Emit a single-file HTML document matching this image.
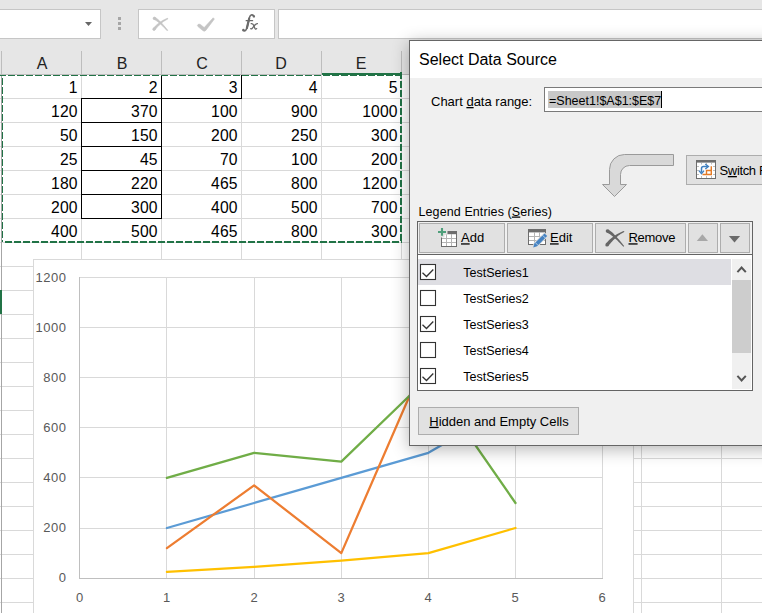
<!DOCTYPE html>
<html><head><meta charset="utf-8">
<style>
html,body{margin:0;padding:0;}
body{width:762px;height:613px;overflow:hidden;position:relative;background:#fff;font-family:"Liberation Sans",sans-serif;}
.abs{position:absolute;}
svg{position:absolute;left:0;top:0;}
#dlg{position:absolute;left:409px;top:40px;width:400px;height:404px;border:1px solid #666;background:#f0f0f0;box-shadow:0 3px 16px rgba(0,0,0,0.3);overflow:hidden;}
#dlg svg{left:-410px;top:-41px;}
</style></head><body>

<!-- Sheet + chart -->
<svg width="762" height="613" font-family="Liberation Sans, sans-serif">
  <!-- top bar -->
  <rect x="0" y="0" width="762" height="74" fill="#e6e6e6"/>
  <rect x="-1" y="9.5" width="101.5" height="29" fill="#fff" stroke="#c6c6c6"/>
  <path d="M85,22 L92,22 L88.5,26 Z" fill="#666"/>
  <rect x="118" y="17" width="3" height="3" fill="#a6a6a6"/>
  <rect x="118" y="22" width="3" height="3" fill="#a6a6a6"/>
  <rect x="118" y="27" width="3" height="3" fill="#a6a6a6"/>
  <rect x="138.5" y="9.5" width="136" height="29" fill="#fff" stroke="#c6c6c6"/>
  <g fill="#c4c4c4" stroke="#c4c4c4" stroke-width="0.9" stroke-linejoin="round" transform="translate(152.8,17.2) scale(0.79) translate(-605.3,-229.6)">
    <path d="M606.58,232.36 L607.13,232.56 L607.70,232.79 L608.31,233.10 L608.97,233.47 L609.68,233.90 L610.42,234.40 L611.21,234.97 L612.03,235.60 L612.89,236.29 L613.79,237.05 L614.72,237.87 L615.69,238.76 L616.70,239.70 L617.74,240.71 L618.81,241.78 L619.92,242.92 L621.07,244.11 L622.25,245.37 L623.46,246.69 L624.14,246.11 L623.01,244.71 L621.91,243.37 L620.84,242.09 L619.80,240.87 L618.80,239.72 L617.82,238.62 L616.88,237.58 L615.97,236.60 L615.09,235.67 L614.24,234.81 L613.42,234.01 L612.63,233.26 L611.87,232.57 L611.13,231.94 L610.42,231.36 L609.73,230.84 L609.07,230.38 L608.42,229.97 L607.82,229.64 Z"/>
    <path d="M607.95,245.86 L608.71,244.86 L609.48,243.91 L610.26,242.98 L611.04,242.07 L611.84,241.20 L612.66,240.35 L613.48,239.53 L614.32,238.73 L615.17,237.97 L616.03,237.23 L616.90,236.52 L617.79,235.83 L618.69,235.18 L619.61,234.55 L620.53,233.95 L621.47,233.37 L622.43,232.83 L623.39,232.31 L624.38,231.81 L624.02,230.99 L622.97,231.39 L621.93,231.82 L620.90,232.28 L619.88,232.78 L618.86,233.30 L617.85,233.86 L616.86,234.45 L615.87,235.07 L614.89,235.72 L613.92,236.40 L612.96,237.11 L612.01,237.86 L611.07,238.63 L610.14,239.44 L609.22,240.28 L608.31,241.15 L607.41,242.05 L606.52,242.99 L605.65,243.94 Z"/>
    <circle cx="607.2" cy="231" r="1.5"/>
    <circle cx="606.8" cy="244.9" r="1.5"/>
  </g>
  <path d="M197.4,25.4 Q198.4,23.2 200.4,24.4 L204.2,27.6 L213.2,17.8 L214.4,19.0 L205.8,30.4 Q204.4,31.9 202.8,30.6 L198.0,26.6 Z" fill="#c4c4c4" stroke="#c4c4c4" stroke-width="0.6" stroke-linejoin="round"/>
  <g stroke="#6b6b6b" fill="none" stroke-linecap="round">
    <path d="M243.2,30.6 C245.2,31.6 246.6,30.2 247.4,26.2 L249.4,17.6 C250.1,14.8 252,14.2 253.6,15.6" stroke-width="1.6"/>
    <path d="M246.9,28 L247.5,25.6 L249.2,18.6" stroke-width="2.2"/>
    <circle cx="243.4" cy="30" r="1.3" fill="#6b6b6b" stroke="none"/>
    <circle cx="253.9" cy="16.4" r="1.2" fill="#6b6b6b" stroke="none"/>
    <path d="M246.2,20.7 H252.6" stroke-width="1.3"/>
    <path d="M251.2,23.6 C252.8,23.2 253.4,24.2 254,26 L254.6,27.8 C255.1,29.2 255.9,29.4 256.6,28.6" stroke-width="1.3"/>
    <path d="M257.4,23.6 C256.4,23.4 255.4,24.2 253.6,26.6 L252.4,28.2 C251.8,29 251.2,29.2 250.8,28.6" stroke-width="1.3"/>
  </g>
  <rect x="278.5" y="9.5" width="500" height="29" fill="#fff" stroke="#c6c6c6"/>

  <!-- column headers -->
  <g stroke="#bdbdbd" stroke-width="1">
    <line x1="1.5" y1="51" x2="1.5" y2="613"/>
    <line x1="81.5" y1="51" x2="81.5" y2="74"/>
    <line x1="161.5" y1="51" x2="161.5" y2="74"/>
    <line x1="241.5" y1="51" x2="241.5" y2="74"/>
    <line x1="321.5" y1="51" x2="321.5" y2="74"/>
    <line x1="401.5" y1="51" x2="401.5" y2="74"/>
    <line x1="0" y1="74.5" x2="762" y2="74.5"/>
  </g>
  <g font-size="16" fill="#222" text-anchor="middle">
    <text x="42" y="69">A</text>
    <text x="122" y="69">B</text>
    <text x="202" y="69">C</text>
    <text x="281" y="69">D</text>
    <text x="361" y="69">E</text>
  </g>

  <!-- grid -->
  <g stroke="#d9d9d9" stroke-width="1">
    <line x1="81.5" y1="75" x2="81.5" y2="613"/>
    <line x1="161.5" y1="75" x2="161.5" y2="613"/>
    <line x1="241.5" y1="75" x2="241.5" y2="613"/>
    <line x1="321.5" y1="75" x2="321.5" y2="613"/>
    <line x1="401.5" y1="75" x2="401.5" y2="613"/>
    <line x1="481.5" y1="75" x2="481.5" y2="613"/>
    <line x1="561.5" y1="75" x2="561.5" y2="613"/>
    <line x1="641.5" y1="75" x2="641.5" y2="613"/>
    <line x1="721.5" y1="75" x2="721.5" y2="613"/>
    <line x1="0" y1="98.5" x2="762" y2="98.5"/>
    <line x1="0" y1="122.5" x2="762" y2="122.5"/>
    <line x1="0" y1="146.5" x2="762" y2="146.5"/>
    <line x1="0" y1="170.5" x2="762" y2="170.5"/>
    <line x1="0" y1="194.5" x2="762" y2="194.5"/>
    <line x1="0" y1="218.5" x2="762" y2="218.5"/>
    <line x1="0" y1="242.5" x2="762" y2="242.5"/>
    <line x1="0" y1="266.5" x2="762" y2="266.5"/>
    <line x1="0" y1="290.5" x2="762" y2="290.5"/>
    <line x1="0" y1="314.5" x2="762" y2="314.5"/>
    <line x1="0" y1="338.5" x2="762" y2="338.5"/>
    <line x1="0" y1="362.5" x2="762" y2="362.5"/>
    <line x1="0" y1="386.5" x2="762" y2="386.5"/>
    <line x1="0" y1="410.5" x2="762" y2="410.5"/>
    <line x1="0" y1="434.5" x2="762" y2="434.5"/>
    <line x1="0" y1="458.5" x2="762" y2="458.5"/>
    <line x1="0" y1="482.5" x2="762" y2="482.5"/>
    <line x1="0" y1="506.5" x2="762" y2="506.5"/>
    <line x1="0" y1="530.5" x2="762" y2="530.5"/>
    <line x1="0" y1="554.5" x2="762" y2="554.5"/>
    <line x1="0" y1="578.5" x2="762" y2="578.5"/>
    <line x1="0" y1="602.5" x2="762" y2="602.5"/>
  </g>
  <line x1="1.5" y1="75" x2="1.5" y2="613" stroke="#a6a6a6"/>
  <rect x="0" y="290" width="2" height="24" fill="#217346"/>

  <!-- black borders -->
  <g stroke="#000" stroke-width="1">
    <line x1="81.5" y1="98" x2="81.5" y2="219"/>
    <line x1="161.5" y1="75" x2="161.5" y2="219"/>
    <line x1="241.5" y1="75" x2="241.5" y2="99"/>
    <line x1="81" y1="98.5" x2="242" y2="98.5"/>
    <line x1="81" y1="122.5" x2="162" y2="122.5"/>
    <line x1="81" y1="146.5" x2="162" y2="146.5"/>
    <line x1="81" y1="170.5" x2="162" y2="170.5"/>
    <line x1="81" y1="194.5" x2="162" y2="194.5"/>
    <line x1="81" y1="218.5" x2="162" y2="218.5"/>
  </g>

  <!-- cell values -->
  <g font-size="15.7" fill="#000" text-anchor="end" letter-spacing="0.15" transform="translate(-1.3,0)">
    <text x="79" y="93">1</text><text x="159" y="93">2</text><text x="239" y="93">3</text><text x="319" y="93">4</text><text x="399" y="93">5</text>
    <text x="79" y="117">120</text><text x="159" y="117">370</text><text x="239" y="117">100</text><text x="319" y="117">900</text><text x="399" y="117">1000</text>
    <text x="79" y="141">50</text><text x="159" y="141">150</text><text x="239" y="141">200</text><text x="319" y="141">250</text><text x="399" y="141">300</text>
    <text x="79" y="165">25</text><text x="159" y="165">45</text><text x="239" y="165">70</text><text x="319" y="165">100</text><text x="399" y="165">200</text>
    <text x="79" y="189">180</text><text x="159" y="189">220</text><text x="239" y="189">465</text><text x="319" y="189">800</text><text x="399" y="189">1200</text>
    <text x="79" y="213">200</text><text x="159" y="213">300</text><text x="239" y="213">400</text><text x="319" y="213">500</text><text x="399" y="213">700</text>
    <text x="79" y="237">400</text><text x="159" y="237">500</text><text x="239" y="237">465</text><text x="319" y="237">800</text><text x="399" y="237">300</text>
  </g>

  <!-- selection marching ants -->
  <g stroke="#217346" fill="none">
    <line x1="-1" y1="75.5" x2="401" y2="75.5" stroke-width="1" stroke-dasharray="7 2"/>
    <line x1="2.5" y1="78" x2="2.5" y2="242" stroke-width="1" stroke-dasharray="7 2"/>
    <line x1="5" y1="242" x2="402" y2="242" stroke-width="2" stroke-dasharray="7 2"/>
    <line x1="401" y1="72" x2="401" y2="243" stroke-width="2" stroke-dasharray="7 2"/>
    <line x1="322" y1="74" x2="402" y2="74" stroke-width="2"/>
  </g>

  <!-- chart -->
  <rect x="33.5" y="259.5" width="600" height="400" fill="#fff" stroke="#d9d9d9"/>
  <g stroke="#d9d9d9" stroke-width="1">
    <line x1="79.5" y1="277.5" x2="602.5" y2="277.5"/>
    <line x1="79.5" y1="327.5" x2="602.5" y2="327.5"/>
    <line x1="79.5" y1="377.5" x2="602.5" y2="377.5"/>
    <line x1="79.5" y1="427.5" x2="602.5" y2="427.5"/>
    <line x1="79.5" y1="477.5" x2="602.5" y2="477.5"/>
    <line x1="79.5" y1="528.5" x2="602.5" y2="528.5"/>
    <line x1="166.5" y1="277.5" x2="166.5" y2="578.5"/>
    <line x1="254.5" y1="277.5" x2="254.5" y2="578.5"/>
    <line x1="341.5" y1="277.5" x2="341.5" y2="578.5"/>
    <line x1="428.5" y1="277.5" x2="428.5" y2="578.5"/>
    <line x1="515.5" y1="277.5" x2="515.5" y2="578.5"/>
    <line x1="602.5" y1="277.5" x2="602.5" y2="578.5"/>
  </g>
  <line x1="79.5" y1="277" x2="79.5" y2="579" stroke="#bfbfbf"/>
  <line x1="79" y1="578.5" x2="603" y2="578.5" stroke="#bfbfbf"/>
  <g font-size="13" fill="#595959" text-anchor="end" letter-spacing="0.5" transform="translate(0.5,0)">
    <text x="66" y="282">1200</text>
    <text x="66" y="332">1000</text>
    <text x="66" y="382">800</text>
    <text x="66" y="432">600</text>
    <text x="66" y="482">400</text>
    <text x="66" y="532">200</text>
    <text x="66" y="582">0</text>
  </g>
  <g font-size="13" fill="#595959" text-anchor="middle">
    <text x="79.5" y="602">0</text>
    <text x="166.5" y="602">1</text>
    <text x="254" y="602">2</text>
    <text x="341" y="602">3</text>
    <text x="428" y="602">4</text>
    <text x="515" y="602">5</text>
    <text x="602" y="602">6</text>
  </g>
  <g fill="none" stroke-width="2.25" stroke-linejoin="round" stroke-linecap="round">
    <polyline stroke="#5b9bd5" points="166.9,528.0 254.1,503.0 341.3,477.9 428.4,452.8 515.5,402.6"/>
    <polyline stroke="#ed7d31" points="166.9,548.1 254.1,485.4 341.3,553.1 428.4,352.5 515.5,327.4"/>
    <polyline stroke="#ffc000" points="166.9,571.9 254.1,566.9 341.3,560.6 428.4,553.1 515.5,528.0"/>
    <polyline stroke="#70ad47" points="166.9,477.9 254.1,452.8 341.3,461.6 428.4,377.5 515.5,503.0"/>
  </g>
</svg>

<!-- Dialog -->
<div id="dlg">
<svg width="762" height="613" font-family="Liberation Sans, sans-serif">
  <rect x="410" y="41" width="400" height="37" fill="#fff"/>
  <text x="419" y="65" font-size="16" fill="#000">Select Data Source</text>
  <text x="431" y="106" font-size="13" fill="#000">Chart <tspan text-decoration="underline">d</tspan>ata range:</text>
  <rect x="544.5" y="87.5" width="300" height="24" fill="#fff" stroke="#7a7a7a"/>
  <rect x="548" y="91" width="113" height="17" fill="#c8c8c8"/>
  <text x="549" y="105" font-size="12.5" fill="#000">=Sheet1!$A$1:$E$7</text>
  <line x1="661.5" y1="91" x2="661.5" y2="108" stroke="#000"/>

  <!-- curved arrow -->
  <path d="M673.5,154.5 L624.5,154.5 A15,15 0 0 0 609.5,169.5 L609.5,184.5 L602.5,184.5 L614.5,196.5 L626.5,184.5 L620.5,184.5 L620.5,174.5 A9,9 0 0 1 629.5,165.5 L673.5,165.5 Z" fill="#d9d9d9" stroke="#9a9a9a" stroke-width="1"/>
  <!-- switch button -->
  <rect x="686.5" y="155.5" width="120" height="29" fill="#e1e1e1" stroke="#adadad"/>
  <g>
    <rect x="696.5" y="160.5" width="19" height="18" fill="#fff" stroke="#6d6d6d"/>
    <rect x="696" y="160" width="20" height="2.6" fill="#6d6d6d"/>
    <g stroke="#bdbdbd" stroke-width="1">
      <path d="M697,166.5 H699 M697,170.5 H699 M697,174.5 H699 M713,166.5 H715 M713,170.5 H715 M713,174.5 H715"/>
      <path d="M701.5,163 V164.5 M706.5,163 V164.5 M711.5,163 V164.5 M701.5,176 V178 M706.5,176 V178 M711.5,176 V178"/>
    </g>
    <path d="M701.5,172.5 V168.5 Q701.5,166.5 703.5,166.5 H707.8" stroke="#3f7fbf" stroke-width="1.5" fill="none"/>
    <path d="M705.3,164 L708.4,166.5 L705.3,169" stroke="#3f7fbf" stroke-width="1.4" fill="none"/>
    <path d="M699,170.6 L701.5,173.6 L704,170.6" stroke="#3f7fbf" stroke-width="1.4" fill="none"/>
    <path d="M711.3,166.2 V174.5 H702.5 M706.5,174.5 V170.5 H711.3" stroke="#e47a25" stroke-width="1.4" fill="none"/>
  </g>
  <text x="719.5" y="175" font-size="13" fill="#000" letter-spacing="-0.35">S<tspan text-decoration="underline">w</tspan>itch Row/Column</text>

  <!-- legend label -->
  <text x="418.5" y="215.5" font-size="12.5" letter-spacing="0.1" fill="#000">Legend Entries (<tspan text-decoration="underline">S</tspan>eries)</text>

  <!-- frame -->
  <rect x="417.5" y="221.5" width="335" height="169" fill="#fff" stroke="#646464"/>
  <rect x="418" y="222" width="334" height="32" fill="#f0f0f0"/>
  <line x1="418" y1="254.5" x2="752" y2="254.5" stroke="#646464"/>
  <!-- toolbar buttons -->
  <g fill="#e1e1e1" stroke="#adadad">
    <rect x="419.5" y="223.5" width="85" height="29"/>
    <rect x="507.5" y="223.5" width="85" height="29"/>
    <rect x="595.5" y="223.5" width="90" height="29"/>
    <rect x="688.5" y="223.5" width="29" height="29"/>
    <rect x="720.5" y="223.5" width="29" height="29"/>
  </g>
  <!-- add icon -->
  <g>
    <rect x="441.5" y="231.5" width="15" height="15" fill="#fff" stroke="#6d6d6d"/>
    <rect x="441" y="231" width="16" height="3.2" fill="#6d6d6d"/>
    <path d="M442,238.5 H456 M442,242.5 H456 M446.5,234 V246 M451.5,234 V246" stroke="#b4b4b4"/>
    <path d="M442,226.5 V237.5 M436.5,232 H447.5" stroke="#e1e1e1" stroke-width="5"/>
    <path d="M442,228 V235.8 M438,232 H446" stroke="#4f9f7b" stroke-width="2.1"/>
  </g>
  <text x="461" y="242.3" font-size="13" fill="#000"><tspan text-decoration="underline">A</tspan>dd</text>
  <!-- edit icon -->
  <g>
    <rect x="528.5" y="229.5" width="17" height="15" fill="#fff" stroke="#6d6d6d"/>
    <rect x="528" y="229" width="18" height="3.4" fill="#6d6d6d"/>
    <path d="M529,236.5 H545 M529,240.5 H545 M534.5,232 V244 M539.5,232 V244" stroke="#b4b4b4"/>
    <path d="M533.2,247.6 L534.4,243.5 L544.5,233.4 L547.2,236.1 L537.1,246.2 Z" fill="#e1e1e1" stroke="#e1e1e1" stroke-width="1.6" stroke-linejoin="round"/>
    <path d="M533.2,247.6 L534.4,243.5 L544.5,233.4 L547.2,236.1 L537.1,246.2 Z" fill="#4683c2"/>
    <path d="M542.6,235.3 L545.3,238 M535.3,242.6 L538,245.3" stroke="#e8eef5" stroke-width="0.7"/>
  </g>
  <text x="550" y="242.3" font-size="13" fill="#000"><tspan text-decoration="underline">E</tspan>dit</text>
  <!-- remove icon -->
  <g fill="#666">
    <path d="M606.67,232.54 L607.19,232.75 L607.72,233.00 L608.30,233.30 L608.93,233.67 L609.62,234.11 L610.34,234.60 L611.11,235.16 L611.93,235.78 L612.78,236.47 L613.67,237.22 L614.60,238.02 L615.57,238.90 L616.58,239.83 L617.63,240.83 L618.71,241.88 L619.84,243.00 L620.99,244.18 L622.19,245.42 L623.42,246.73 L624.18,246.07 L623.07,244.66 L621.99,243.30 L620.94,242.01 L619.92,240.78 L618.93,239.60 L617.98,238.49 L617.06,237.44 L616.16,236.44 L615.30,235.51 L614.47,234.64 L613.66,233.82 L612.89,233.07 L612.14,232.37 L611.41,231.73 L610.71,231.15 L610.03,230.63 L609.37,230.17 L608.72,229.77 L608.13,229.46 Z"/>
    <path d="M608.32,245.97 L609.08,245.00 L609.83,244.06 L610.60,243.14 L611.37,242.25 L612.15,241.38 L612.94,240.53 L613.74,239.72 L614.55,238.92 L615.38,238.15 L616.22,237.41 L617.07,236.69 L617.94,236.00 L618.82,235.33 L619.71,234.69 L620.62,234.07 L621.54,233.48 L622.47,232.92 L623.43,232.38 L624.40,231.86 L624.00,230.94 L622.94,231.32 L621.89,231.73 L620.85,232.17 L619.81,232.65 L618.79,233.16 L617.77,233.70 L616.77,234.28 L615.77,234.89 L614.79,235.54 L613.82,236.21 L612.86,236.93 L611.91,237.67 L610.97,238.45 L610.05,239.26 L609.14,240.11 L608.25,240.99 L607.37,241.90 L606.51,242.85 L605.68,243.83 Z"/>
    <circle cx="607.4" cy="231" r="1.7"/>
    <circle cx="607.0" cy="244.9" r="1.7"/>
  </g>
  <text x="628.5" y="242.3" font-size="13" letter-spacing="-0.3" fill="#000"><tspan text-decoration="underline">R</tspan>emove</text>
  <path d="M696.8,240.9 L702.4,234.2 L708,240.9 Z" fill="#a8a8a8"/>
  <path d="M728.9,236.1 L740.1,236.1 L734.5,242.5 Z" fill="#6a6a6a"/>

  <!-- list rows -->
  <rect x="418" y="259" width="313" height="26" fill="#dedee3"/>
  <g fill="#fff" stroke="#333" stroke-width="1.1">
    <rect x="420.5" y="264.5" width="15" height="15"/>
    <rect x="420.5" y="290.5" width="15" height="15"/>
    <rect x="420.5" y="316.5" width="15" height="15"/>
    <rect x="420.5" y="342.5" width="15" height="15"/>
    <rect x="420.5" y="368.5" width="15" height="15"/>
  </g>
  <g fill="none" stroke="#333" stroke-width="1.3">
    <path d="M422.5,272.8 L426.5,276.5 L433.3,269.5"/>
    <path d="M422.5,324.8 L426.5,328.5 L433.3,321.5"/>
    <path d="M422.5,376.8 L426.5,380.5 L433.3,373.5"/>
  </g>
  <g font-size="12.5" fill="#000">
    <text x="463.3" y="277">TestSeries1</text>
    <text x="463.3" y="303">TestSeries2</text>
    <text x="463.3" y="329">TestSeries3</text>
    <text x="463.3" y="355">TestSeries4</text>
    <text x="463.3" y="381">TestSeries5</text>
  </g>
  <!-- scrollbar -->
  <rect x="732" y="259" width="19" height="130" fill="#f0f0f0"/>
  <rect x="732" y="280" width="19" height="73" fill="#cdcdcd"/>
  <path d="M737.4,272.2 L741.6,267.6 L745.8,272.2" stroke="#555" stroke-width="2" fill="none"/>
  <path d="M737.4,375.8 L741.6,380.4 L745.8,375.8" stroke="#555" stroke-width="2" fill="none"/>

  <!-- hidden and empty cells -->
  <rect x="418.5" y="407.5" width="160" height="27" fill="#e1e1e1" stroke="#adadad"/>
  <text x="429.3" y="425.8" font-size="13" fill="#000"><tspan text-decoration="underline">H</tspan>idden and Empty Cells</text>
</svg>
</div>

</body></html>
